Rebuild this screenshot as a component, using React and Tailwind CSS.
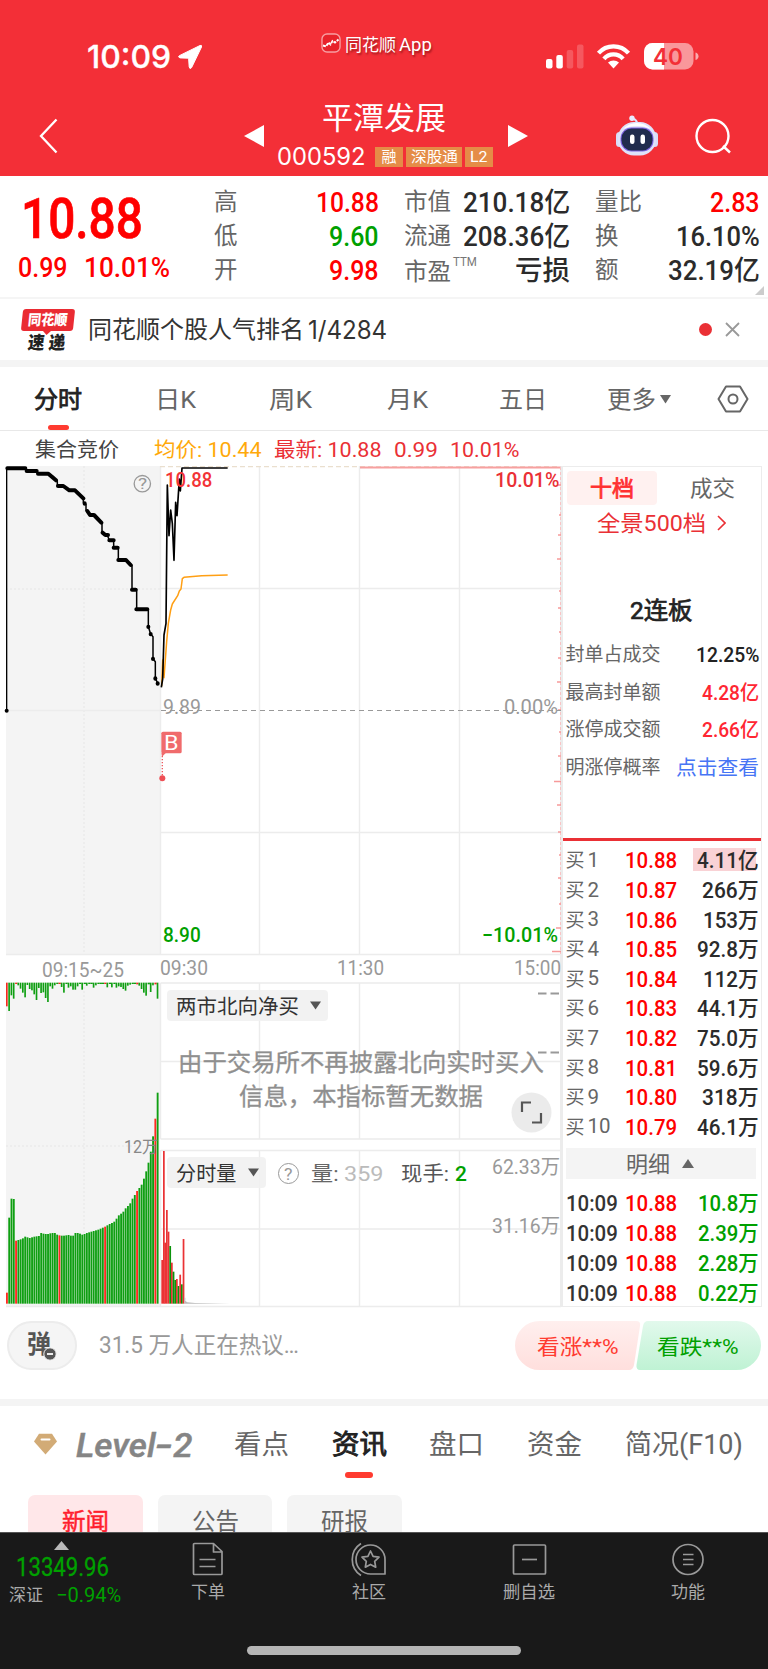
import React, { useLayoutEffect, useRef, useState } from "react";

/* Condenses or widens one line of text to the width of its box. */
function Fit({ children, className = "" }) {
  const box = useRef(null);
  const line = useRef(null);
  const [scale, setScale] = useState(1);
  useLayoutEffect(() => {
    setScale(box.current.clientWidth / line.current.offsetWidth);
  }, []);
  return (
    <span ref={box} className={`block shrink-0 whitespace-nowrap ${className}`}>
      <span ref={line} className="inline-block origin-left" style={{ transform: `translateY(1px) scaleX(${scale})` }}>
        {children}
      </span>
    </span>
  );
}

function StatusBar() {
  return (
    <div className="flex h-[88px] items-start text-white">
      <Fit className="ml-[87px] mt-[40px] w-[84px] text-[31.5px] font-medium leading-[32px] [-webkit-text-stroke:0.3px] [font-family:Inter,sans-serif]">10:09</Fit>
      <svg className="ml-[7px] mt-[44px]" width="25" height="26" viewBox="0 0 25 26">
        <path d="M22 1.5 L1.3 11.7 Q-.4 13.2 2 13.9 L10.6 14.2 L11.2 23 Q11.8 25.8 13.6 23.6 L23.5 3 Q24 .6 22 1.5Z" fill="#fff" stroke="#fff" strokeWidth="1" />
      </svg>
      <svg className="ml-[118px] mt-[33px]" width="20" height="20" viewBox="0 0 20 20">
        <rect x="1" y="1" width="18" height="18" rx="5" fill="#e8222b" stroke="#fff" strokeOpacity=".55" strokeWidth="1.4" />
        <path d="M2 12.5l3 1 2.5-4 2 2 2-3.5 2.5 1.5 3.5-3" fill="none" stroke="#fff" strokeWidth="1.900" strokeDasharray="3 1" />
      </svg>
      <Fit className="ml-[4px] mt-[34px] w-[87px] text-[17px] leading-[20px] [text-shadow:1px_2px_2px_rgba(80,0,0,.5)]">同花顺<span className="ml-[3px] text-[18.5px]">App</span></Fit>
      <svg className="ml-[113px] mt-[42px]" width="154" height="30" viewBox="0 0 154 30">
        <rect x="1" y="17" width="6.5" height="9.5" rx="2" fill="#fff" />
        <rect x="11.300" y="13" width="6.500" height="13.500" rx="2" fill="#fff" />
        <rect x="21.700" y="8" width="6.500" height="18.500" rx="2" fill="#fff" fillOpacity=".2" />
        <rect x="32" y="2.500" width="6.500" height="24" rx="2" fill="#fff" fillOpacity=".2" />
        <g fill="none" stroke="#fff" strokeWidth="4.2">
          <path d="M53.500 11.200a20 20 0 0 1 30 0" />
          <path d="M58.900 16.800a12.600 12.600 0 0 1 19.200 0" />
        </g>
        <path d="M63 20.600a8 8 0 0 1 11 0l-5.500 5.800z" fill="#fff" />
        <clipPath id="cell"><rect x="99" y="1" width="49.500" height="26.500" rx="8.500" /></clipPath>
        <g clipPath="url(#cell)">
          <rect x="99" y="1" width="50" height="27" fill="#fff" fillOpacity=".5" />
          <rect x="99" y="1" width="20" height="27" fill="#fff" />
        </g>
        <path d="M150.500 10.500q3 1 3 3.800t-3 3.800z" fill="#fff" fillOpacity=".6" />
        <text x="123" y="22.800" textAnchor="middle" fontFamily="Inter, sans-serif" fontWeight="600" fontSize="23.500" fill="#f32f37" textLength="30" lengthAdjust="spacingAndGlyphs">40</text>
      </svg>
    </div>
  );
}

function Robot() {
  return (
    <svg className="ml-[87px]" width="44" height="42" viewBox="0 0 44 42">
      <path d="M22 9Q22 5 18.500 4" fill="none" stroke="#dfe3fb" strokeWidth="2.2" />
      <circle cx="17" cy="3.200" r="2.700" fill="#e9ebff" />
      <rect x="1" y="17" width="7" height="15" rx="3.500" fill="#d9ddf8" />
      <rect x="36" y="17" width="7" height="15" rx="3.500" fill="#d9ddf8" />
      <rect x="3" y="7" width="38" height="33.500" rx="16" fill="#dfe2fa" />
      <path d="M8 14Q14 8 22 8t14 6Q30 11 22 11T8 14Z" fill="#fff" />
      <rect x="5.500" y="12.500" width="33" height="24" rx="11" fill="#7c63e0" />
      <rect x="6.500" y="13.500" width="31" height="22" rx="10" fill="#202c4d" />
      <rect x="15" y="19.500" width="4.500" height="9.500" rx="2.200" fill="#fff" />
      <rect x="25.500" y="19.500" width="4.500" height="9.500" rx="2.200" fill="#fff" />
    </svg>
  );
}

function TitleBar() {
  return (
    <div className="flex h-[88px] items-start text-white">
      <svg className="ml-[38px] mt-[30px]" width="21" height="36" viewBox="0 0 21 36">
        <path d="M18.500 1.500L3 18l15.500 16.500" fill="none" stroke="#fff" strokeWidth="2.300" />
      </svg>
      <svg className="ml-[185px] mt-[37px]" width="20" height="22" viewBox="0 0 20 22"><path d="M20 0v22L0 11z" fill="#fff" /></svg>
      <div className="ml-[13px] flex w-[218px] flex-col">
        <Fit className="ml-[45px] mt-[11px] w-[124px] text-[31px] leading-[38px]">平潭发展</Fit>
        <div className="mt-[8px] flex h-[22px] items-center">
          <Fit className="w-[89px] text-[24px] leading-[22px] [font-family:Inter,sans-serif]">000592</Fit>
          <div className="ml-[9px] mt-[1px] flex gap-[3px] text-[15px] leading-[18px]">
            <div className="flex h-[20px] w-[28px] justify-center bg-[#e58c47]"><Fit className="w-[15px]">融</Fit></div>
            <div className="flex h-[20px] w-[56px] justify-center bg-[#e58c47]"><Fit className="w-[47px]">深股通</Fit></div>
            <div className="flex h-[20px] w-[28px] justify-center bg-[#e58c47]"><Fit className="w-[18px]">L2</Fit></div>
          </div>
        </div>
      </div>
      <svg className="ml-[13px] mt-[37px]" width="20" height="22" viewBox="0 0 20 22"><path d="M0 0v22L20 11z" fill="#fff" /></svg>
      <div className="mt-[27px] flex"><Robot /></div>
      <svg className="ml-[36px] mt-[30px]" width="37" height="37" viewBox="0 0 37 37">
        <circle cx="17.500" cy="18" r="16" fill="none" stroke="#fff" strokeWidth="2.400" />
        <path d="M28 28l7 6.500" stroke="#fff" strokeWidth="2.400" />
      </svg>
    </div>
  );
}

function Row({ label, children }) {
  return (
    <div className="flex h-[34px] items-center justify-between">
      {label}
      {children}
    </div>
  );
}

function Quote() {
  const lab = "text-[23.5px] leading-[34px] text-[#666]";
  const val = "text-[27px] font-medium leading-[34px]";
  return (
    <div className="flex h-[121px] pt-[9px]">
      <div className="w-[214px] shrink-0 text-[#f00]">
        <Fit className="ml-[21px] mt-[3px] w-[122px] text-[56px] font-medium leading-[60px] [-webkit-text-stroke:0.7px]">10.88</Fit>
        <div className="mt-[2px] flex text-[28px] leading-[34px]">
          <Fit className="ml-[18px] w-[50px] font-medium">0.99</Fit>
          <Fit className="ml-[16px] w-[86px] font-medium">10.01%</Fit>
        </div>
      </div>
      <div className="w-[165px]">
        <Row label={<span className={lab}>高</span>}><Fit className={`w-[63px] text-[#f00] ${val}`}>10.88</Fit></Row>
        <Row label={<span className={lab}>低</span>}><Fit className={`w-[50px] text-[#00a000] ${val}`}>9.60</Fit></Row>
        <Row label={<span className={lab}>开</span>}><Fit className={`w-[50px] text-[#f00] ${val}`}>9.98</Fit></Row>
      </div>
      <div className="ml-[25px] w-[166px] text-[#2b2b2b]">
        <Row label={<span className={lab}>市值</span>}><Fit className={`w-[107px] ${val}`}>210.18亿</Fit></Row>
        <Row label={<span className={lab}>流通</span>}><Fit className={`w-[107px] ${val}`}>208.36亿</Fit></Row>
        <Row
          label={
            <span className="flex pt-[4px]">
              <span className={lab}>市盈</span>
              <Fit className="-mt-[2px] ml-[2px] w-[24px] text-[12px] leading-[16px] text-[#777]">TTM</Fit>
            </span>
          }
        >
          <Fit className={`w-[55px] ${val}`}>亏损</Fit>
        </Row>
      </div>
      <div className="ml-[25px] w-[165px] text-[#2b2b2b]">
        <Row label={<span className={lab}>量比</span>}><Fit className={`w-[50px] text-[#f00] ${val}`}>2.83</Fit></Row>
        <Row label={<span className={lab}>换</span>}><Fit className={`w-[84px] ${val}`}>16.10%</Fit></Row>
        <Row label={<span className={lab}>额</span>}><Fit className={`w-[92px] ${val}`}>32.19亿</Fit></Row>
      </div>
      <svg className="-ml-[5px] mt-[101px] shrink-0" width="9" height="9" viewBox="0 0 9 9"><path d="M9 0v9H0z" fill="#ccc" /></svg>
    </div>
  );
}

function Banner() {
  return (
    <div className="flex h-[63px] items-center border-t-2 border-[#f5f5f5]">
      <div className="ml-[22px] w-[52px] pt-[2px]">
        <div className="flex h-[22px] -skew-x-6 items-center justify-center rounded-[3px] bg-[#ea2b33]">
          <Fit className="w-[40px] text-[14.5px] font-black leading-[18px] text-white">同花顺</Fit>
        </div>
        <svg className="ml-[21px] block" width="8" height="4" viewBox="0 0 8 4"><path d="M0 0h8L3.500 4z" fill="#ea2b33" /></svg>
        <div className="-mt-[3px] flex h-[20px] -skew-x-6 justify-center pr-[3px]">
          <Fit className="w-[37px] text-[18px] font-black leading-[20px] text-[#222]">速 递</Fit>
        </div>
      </div>
      <Fit className="-mt-[1px] ml-[14px] w-[216px] text-[24px] leading-[34px] text-[#333]">同花顺个股人气排名</Fit>
      <Fit className="-mt-[1px] ml-[4px] w-[79px] text-[25px] leading-[34px] text-[#333] [font-family:Inter,sans-serif]">1/4284</Fit>
      <div className="ml-[312px] size-[13px] rounded-full bg-[#ea3035]" />
      <svg className="ml-[13px]" width="15" height="15" viewBox="0 0 15 15"><path d="M1 1l13 13M14 1L1 14" stroke="#999" strokeWidth="1.800" /></svg>
    </div>
  );
}

function PeriodTabs() {
  return (
    <div className="flex h-[64px] border-b border-[#e8e8e8] pt-[15px] text-[24px] leading-[34px] text-[#666]">
      <div className="ml-[34px] w-[48px]">
        <Fit className="w-[48px] text-[#222] [-webkit-text-stroke:0.8px]">分时</Fit>
        <div className="ml-[14px] mt-[9px] h-[5px] w-[21px] rounded-full bg-[#ff3b30]" />
      </div>
      <Fit className="ml-[73px] w-[41px]">日K</Fit>
      <Fit className="ml-[73px] w-[43px]">周K</Fit>
      <Fit className="ml-[75px] w-[41px]">月K</Fit>
      <Fit className="ml-[71px] w-[48px]">五日</Fit>
      <Fit className="ml-[60px] w-[49px]">更多</Fit>
      <svg className="ml-[4px] mt-[13px]" width="11" height="9" viewBox="0 0 11 9"><path d="M0 0h11L5.500 8.500z" fill="#666" /></svg>
      <svg className="ml-[46px] mt-[3px]" width="32" height="28" viewBox="0 0 32 28" fill="none" stroke="#666" strokeWidth="2">
        <path d="M9 1.500h14L30.500 14 23 26.500H9L1.500 14z" strokeLinejoin="round" />
        <circle cx="16" cy="14" r="4.500" />
      </svg>
    </div>
  );
}

function Legend() {
  return (
    <div className="flex h-[35px] items-center text-[20.5px] leading-[30px] text-[#ea3035]">
      <Fit className="ml-[35px] w-[84px] text-[#444]">集合竞价</Fit>
      <Fit className="ml-[35px] w-[108px] text-[#ffa90a]">均价: 10.44</Fit>
      <Fit className="ml-[12px] w-[108px]">最新: 10.88</Fit>
      <Fit className="ml-[12px] w-[44px]">0.99</Fit>
      <Fit className="ml-[12px] w-[70px]">10.01%</Fit>
    </div>
  );
}

const depthTops = [
  1088, 863, 806, 807, 932, 930, 928, 925, 920, 922, 924, 922, 920, 919, 918, 909, 911, 912, 912, 910, 909, 909, 914, 916, 917, 917, 916, 915,
  917, 917, 909, 909, 911, 914, 912, 909, 907, 905, 903, 901, 899, 896, 893, 890, 886, 882, 879, 875, 866, 856, 851, 845, 835, 828, 820, 806,
  795, 783, 774, 764, 746, 724, 698, 665, 619, 566, 488,
];
const hangBottoms = [
  228, 242, 195, 205, 161, 165, 175, 187, 201, 164, 176, 180, 192, 209, 173, 188, 186, 203, 215, 168, 175, 165, 161, 161, 170, 187, 161, 172,
  168, 178, 178, 168, 161, 178, 161, 166, 161, 161, 172, 165, 161, 161, 161, 161, 171, 161, 171, 161, 172, 168, 170, 176, 181, 166, 163, 161,
  161, 162, 166, 176, 187, 196, 162, 185, 165, 162, 205,
];
const redBars = [0, 4, 23, 43, 57, 65];
const minuteBars = [
  [484, 990, 1], [489, 663, 1], [493, 938, 1], [498, 840, 1], [503, 905, 1], [508, 948, 0], [513, 998, 1], [518, 1025, 0], [523, 1050, 0],
  [528, 1047, 1], [533, 1068, 0], [538, 1034, 1], [543, 1063, 0], [548, 927, 1],
];
const edgeTicks = [
  [485, 3], [515, 2], [535, 3], [559, 4], [591, 2], [608, 3], [632, 2], [658, 3], [682, 4], [710, 3], [732, 2], [756, 3], [781.500, 7], [805, 4],
  [832, 3], [855, 2], [878, 3], [904, 2], [928, 5], [951.500, 9],
];

function ChartDrawing() {
  return (
    <svg width="562" height="843" viewBox="0 466 562 843" className="block">
      <rect x="6" y="466" width="154" height="488" fill="#f4f4f4" />
      <rect x="6" y="982.500" width="154" height="323.500" fill="#f4f4f4" />
      <g stroke="#e6e6e6" strokeWidth="1" strokeDasharray="2 2">
        <path d="M84 466V954M84 983V1236M6 589H160M6 1146H157" />
      </g>
      <g stroke="#ececec" strokeWidth="1.400" fill="none">
        <path d="M160.500 466V954.500M259.500 466V954.500M359.500 466V954.500M459.500 466V954.500M160 588.500H561M160 832.500H561M6 710.500H160M6 954.500H561" />
        <path d="M160.500 983H561M160.500 1061.500H561M160.500 1139H561M160.500 983V1139M259.500 983V1139M359.500 983V1139M459.500 983V1139" />
        <path d="M160.500 1150.500H561M160.500 1229H561M6 1306.500H561M160.500 1150V1306M259.500 1150V1306M359.500 1150V1306M459.500 1150V1306" />
        <path d="M561 466V1307" strokeWidth="2" />
      </g>
      <path d="M160 466.500H560" stroke="#eadfce" strokeDasharray="5 3" strokeWidth="1.500" />
      <path d="M360 467.500H560.500" stroke="#f7a0a0" strokeWidth="1.800" />
      <path d="M560.500 467V954" stroke="#f9c4c4" strokeDasharray="3 2" strokeWidth="1" />
      {edgeTicks.map(([y, w]) => (
        <path key={y} d={`M${561 - w} ${y}h${w}`} stroke="#f79a9a" strokeWidth="1.500" />
      ))}
      <path d="M161 710.500H561" stroke="#999" strokeWidth="1.200" strokeDasharray="5 4" />

      <g transform="translate(0 455) scale(.33333)" fill="none" strokeLinejoin="round">
        <path d="M20 766V40" stroke="#000" strokeWidth="4" />
        <circle cx="20" cy="767" r="6" fill="#000" />
        <path
          d="M20 40H76L80 48H110L114 56H145L160 65L172 80V93H190L208 106H225L250 130V143L258 148V166L270 180H282L306 205V233L322 241L328 256H341V278H355V315H378L396 331V403H410V463H445V515L452 537L459 545V611L466 620V670L473 684"
          stroke="#000"
          strokeWidth="4.500"
        />
        <path
          d="M22 40H76M80 48H110M114 56H145L168 76M174 93H190L208 106H225L250 130M254 145v1M262 168L270 180H282L304 203M308 233L316 240H324M328 256H341M341 278H353M355 315H378L392 330M396 404H407M409 463H442M445 515v1M452 537v1M459 611v1M466 670v1M473 685v1"
          stroke="#000"
          strokeWidth="12"
          strokeLinecap="round"
        />
        <path d="M485 694L488 615L492 668L500 560L505 505L512 465L517 447L533 422L538 408L543 402L547 371L552 367L570 365L605 362L683 360" stroke="#ff9f14" strokeWidth="4.500" />
        <path d="M484 697L488 672L492 540L498 505L502 90L507 242L512 165L517 205L522 316L527 142L531 182L538 72L541 108L546 39H683" stroke="#000" strokeWidth="5" />
        <rect x="484" y="830" width="61" height="65" rx="5" fill="#f06b6c" />
        <path d="M484 893h14l-12 12z" fill="#f06b6c" />
        <path d="M487 903V962" stroke="#ee5a5f" strokeWidth="4" strokeDasharray="4 5" />
        <circle cx="487" cy="970" r="9" fill="#ee4f55" />
        <circle cx="427" cy="86" r="24.500" stroke="#999" strokeWidth="4" />
      </g>

      <g transform="translate(0 930) scale(.33333)">
        {depthTops.map((top, i) => (
          <rect key={i} x={18 + i * 6.850} y={top} width="5.600" height={1121 - top} fill={redBars.includes(i) ? "#ff2a20" : "#0f9f12"} />
        ))}
        {hangBottoms.map((bottom, i) => (
          <rect key={i} x={18 + i * 6.850} y="158" width={i && bottom < 163 ? 6.900 : 5} height={bottom - 157} fill={redBars.includes(i) ? "#f5291f" : "#0f9f12"} />
        ))}
        {minuteBars.map(([x, top, up]) => (
          <rect key={x} x={x} y={top} width="5.200" height={1121 - top} fill={up ? "#ea3335" : "#0b930b"} />
        ))}
        <path d="M553 1121V1103H556V1113L562 1117L585 1119L690 1121Z" fill="#bbb" />
      </g>
    </svg>
  );
}

function Caret({ className = "" }) {
  return <svg className={className} width="11" height="9" viewBox="0 0 11 9"><path d="M0 .5h11L5.500 8.500z" fill="#555" /></svg>;
}

function Charts() {
  const tick = "absolute text-[20.5px] leading-[24px]";
  return (
    <div className="relative h-[843px] w-[562px] shrink-0 text-[#999]">
      <ChartDrawing />
      <Fit className="absolute left-[138px] top-[8px] w-[9px] text-[15px] leading-[19px]">?</Fit>
      <Fit className={`${tick} left-[165px] top-[1px] w-[47px] font-medium text-[#f33336]`}>10.88</Fit>
      <Fit className={`${tick} left-[495px] top-[1px] w-[64px] font-medium text-[#ea3035]`}>10.01%</Fit>
      <Fit className={`${tick} left-[163px] top-[228px] w-[38px]`}>9.89</Fit>
      <Fit className={`${tick} left-[504px] top-[228px] w-[54px]`}>0.00%</Fit>
      <Fit className={`${tick} left-[163px] top-[456px] w-[38px] font-medium text-[#00a000]`}>8.90</Fit>
      <Fit className={`${tick} left-[482px] top-[456px] w-[76px] font-medium text-[#00a000]`}>−10.01%</Fit>
      <Fit className="absolute left-[164px] top-[265px] w-[14px] text-[20px] leading-[22px] text-white">B</Fit>
      <Fit className={`${tick} left-[42px] top-[491px] w-[82px]`}>09:15~25</Fit>
      <Fit className={`${tick} left-[160px] top-[489px] w-[48px]`}>09:30</Fit>
      <Fit className={`${tick} left-[337px] top-[489px] w-[47px]`}>11:30</Fit>
      <Fit className={`${tick} left-[514px] top-[489px] w-[47px]`}>15:00</Fit>

      <div className="absolute left-[167px] top-[524px] flex h-[31px] w-[161px] items-center rounded-[4px] bg-[#f1f1f1]/90 pl-[9px] text-[20.5px] leading-[30px] text-[#333]">
        <Fit className="w-[123px]">两市北向净买</Fit>
        <Caret className="ml-[11px]" />
      </div>
      <Fit className="absolute left-[178px] top-[579px] w-[366px] text-[24.4px] leading-[34px] text-[#8f8f8f] [-webkit-text-stroke:0.3px]">由于交易所不再披露北向实时买入</Fit>
      <Fit className="absolute left-[239px] top-[613px] w-[244px] text-[24.4px] leading-[34px] text-[#8f8f8f] [-webkit-text-stroke:0.3px]">信息，本指标暂无数据</Fit>
      <svg className="absolute left-[537px] top-[525px]" width="24" height="64" viewBox="0 0 24 64"><path d="M1 2.500h8.500M13.500 2.500h8.500M1 61.500h8.500M13.500 61.500h8.500" stroke="#999" strokeWidth="1.800" /></svg>
      <svg className="absolute left-[511px] top-[626px]" width="41" height="41" viewBox="0 0 41 41">
        <circle cx="20.500" cy="20.500" r="20" fill="#ebebeb" />
        <path d="M11 20v-9.500h9M30 21v9.500h-9" fill="none" stroke="#555" strokeWidth="2.200" />
      </svg>

      <Fit className="absolute left-[124px] top-[668px] w-[34px] text-[17.5px] leading-[24px] text-[#888]">12万</Fit>
      <div className="absolute left-[167px] top-[691px] flex h-[31px] w-[99px] items-center rounded-[4px] bg-[#f1f1f1]/90 pl-[9px] text-[20.5px] leading-[30px] text-[#333]">
        <Fit className="w-[61px]">分时量</Fit>
        <Caret className="ml-[11px]" />
      </div>
      <div className="absolute left-[278px] top-[697px] flex size-[21px] items-center justify-center rounded-full border-[1.5px] border-[#999]">
        <Fit className="w-[9px] text-[16px] leading-[16px]">?</Fit>
      </div>
      <Fit className="absolute left-[311px] top-[692px] w-[27px] text-[20.5px] leading-[30px] text-[#666]">量:</Fit>
      <Fit className="absolute left-[344px] top-[692px] w-[39px] text-[21px] leading-[30px] text-[#bbb]">359</Fit>
      <Fit className="absolute left-[401px] top-[692px] w-[48px] text-[20.5px] leading-[30px] text-[#555]">现手:</Fit>
      <Fit className="absolute left-[455px] top-[692px] w-[12px] text-[21px] font-medium leading-[30px] text-[#00a000]">2</Fit>
      <Fit className={`${tick} left-[492px] top-[688px] w-[68px]`}>62.33万</Fit>
      <Fit className={`${tick} left-[492px] top-[747px] w-[68px]`}>31.16万</Fit>
    </div>
  );
}

const bids = [
  ["1", "10.88", "4.11亿", "w-[62px]"], ["2", "10.87", "266万", "w-[57px]"], ["3", "10.86", "153万", "w-[56px]"], ["4", "10.85", "92.8万", "w-[62px]"],
  ["5", "10.84", "112万", "w-[56px]"], ["6", "10.83", "44.1万", "w-[62px]"], ["7", "10.82", "75.0万", "w-[62px]"], ["8", "10.81", "59.6万", "w-[62px]"],
  ["9", "10.80", "318万", "w-[57px]"], ["10", "10.79", "46.1万", "w-[62px]"],
];
const trades = ["10.8万", "2.39万", "2.28万", "0.22万"];

function SealRow({ label, children }) {
  return (
    <div className="flex h-[37.8px] items-center justify-between pl-[2.5px] pr-[2px] leading-[30px]">
      <Fit className="w-[95px] text-[19px] text-[#666]">{label}</Fit>
      {children}
    </div>
  );
}

function Book() {
  return (
    <div className="h-[841px] w-[199.5px] border border-[#ececec]">
      <div className="ml-[4px] mt-[4px] flex h-[34px] text-[22px] leading-[34px]">
        <div className="flex w-[90px] justify-center rounded-[4px] bg-[#fff1f0] text-[#ff3030]">
          <Fit className="w-[44px] [-webkit-text-stroke:0.8px]">十档</Fit>
        </div>
        <Fit className="ml-[33px] w-[45px] text-[#666]">成交</Fit>
      </div>
      <div className="ml-[33.5px] mt-[2px] flex h-[32px] items-center text-[#ea3035]">
        <Fit className="w-[109px] text-[22px] leading-[32px]">全景500档</Fit>
        <svg className="ml-[11px]" width="9" height="16" viewBox="0 0 9 16"><path d="M1 1l7 7-7 7" fill="none" stroke="#ea3035" strokeWidth="1.600" /></svg>
      </div>
      <Fit className="ml-[67px] mt-[53px] w-[63px] text-[24px] leading-[36px] text-[#222] [-webkit-text-stroke:0.7px]">2连板</Fit>
      <div className="mt-[7px] text-[20.5px] font-medium text-[#ff2632]">
        <SealRow label={<span className="font-normal">封单占成交</span>}><Fit className="w-[63px] text-[#222]">12.25%</Fit></SealRow>
        <SealRow label={<span className="font-normal">最高封单额</span>}><Fit className="w-[57px]">4.28亿</Fit></SealRow>
        <SealRow label={<span className="font-normal">涨停成交额</span>}><Fit className="w-[57px]">2.66亿</Fit></SealRow>
        <SealRow label={<span className="font-normal">明涨停概率</span>}><Fit className="w-[83px] font-normal text-[#4775f5]">点击查看</Fit></SealRow>
      </div>
      <div className="mt-[51.5px] h-[3.5px] bg-[#ea3035]" />
      <div className="mt-[4px]">
        {bids.map(([n, price, size, w], i) => (
          <div key={n} className="flex h-[29.6px] items-center pl-[2.5px] pr-[2px] text-[22px] font-medium leading-[29px]">
            <Fit className="w-[19px] text-[19px] font-normal text-[#666]">买</Fit>
            <span className="ml-[3px] w-[37.5px] pt-[1px] text-[20.5px] font-normal text-[#666]">{n}</span>
            <Fit className="w-[52px] text-[#f00]">{price}</Fit>
            <div className={i === 0 ? "ml-auto h-[23px] bg-[linear-gradient(90deg,#f9d2d5_95%,transparent_95%)] pl-[4px] leading-[23px]" : "ml-auto"}>
              <Fit className={`text-[#2b2b2b] ${w}`}>{size}</Fit>
            </div>
          </div>
        ))}
      </div>
      <div className="ml-[3px] mt-[7px] flex h-[31px] w-[190px] items-center bg-[#f4f4f4] pl-[60px] text-[#666]">
        <Fit className="w-[44px] text-[22px] leading-[31px]">明细</Fit>
        <svg className="ml-[12px]" width="12" height="9" viewBox="0 0 12 9"><path d="M0 9h12L6 0z" fill="#666" /></svg>
      </div>
      <div className="mt-[9px]">
        {trades.map((size) => (
          <div key={size} className="flex h-[29.7px] items-center pl-[2.5px] pr-[2px] text-[22px] font-medium leading-[29px]">
            <Fit className="w-[52px] text-[#333]">10:09</Fit>
            <Fit className="ml-[7.5px] w-[52px] text-[#f00]">10.88</Fit>
            <Fit className="ml-auto w-[61px] text-[#00a000]">{size}</Fit>
          </div>
        ))}
      </div>
    </div>
  );
}

function Discussion() {
  return (
    <div className="flex h-[90px] items-start pt-[12px]">
      <div className="relative ml-[7px] flex h-[49px] w-[70px] items-center justify-center rounded-[25px] border-2 border-[#ececec] bg-[#f5f5f5]">
        <Fit className="-ml-[7px] -mt-[4px] w-[24px] text-[25px] font-bold leading-[36px] text-[#555]">弹</Fit>
        <svg className="absolute left-[34px] top-[24px]" width="14" height="14" viewBox="0 0 14 14">
          <circle cx="7" cy="7" r="6.200" fill="#555" stroke="#f5f5f5" />
          <path d="M4 7h6" stroke="#fff" strokeWidth="1.800" />
        </svg>
      </div>
      <Fit className="ml-[22px] mt-[7px] w-[200px] text-[23px] leading-[34px] text-[#999]">31.5 万人正在热议…</Fit>
      <div className="relative ml-[216px] flex h-[49px] w-[246px] items-center text-[21px] leading-[32px]">
        <svg className="absolute left-0 top-0" width="246" height="49" viewBox="0 0 246 49">
          <defs>
            <linearGradient id="rise" x2="0" y2="1"><stop stopColor="#ffefee" /><stop offset="1" stopColor="#ffdfdd" /></linearGradient>
            <linearGradient id="fall" x2="0" y2="1"><stop stopColor="#e2f9ec" /><stop offset="1" stopColor="#bff2d4" /></linearGradient>
          </defs>
          <path d="M24.500 0H121q5 0 4 5L119 44q-1 5-5 5H24.500a24.500 24.500 0 0 1 0-49z" fill="url(#rise)" />
          <path d="M133 0h88.500a24.500 24.500 0 0 1 0 49H125q-4 0-3.500-5L128 5q1-5 5-5z" fill="url(#fall)" />
        </svg>
        <Fit className="relative ml-[22px] w-[81px] text-[#ff3b30]">看涨**%</Fit>
        <Fit className="relative ml-[39px] w-[81px] text-[#00a000]">看跌**%</Fit>
      </div>
    </div>
  );
}

function NewsTabs() {
  return (
    <>
      <div className="flex h-[96px] border-t-[7px] border-[#f4f4f4] pt-[19px] text-[27px] leading-[38px] text-[#666]">
        <svg className="ml-[33px] mt-[8px] shrink-0" width="25" height="22" viewBox="0 0 25 22">
          <path d="M6 .8h13L24 8.500 12.500 21.500 1 8.500z" fill="#d2ab76" />
          <path d="M8.500 6.500h8" stroke="#fff" strokeWidth="2" strokeLinecap="round" />
        </svg>
        <Fit className="ml-[18px] w-[116px] text-[34px] font-medium italic text-[#858585] [-webkit-text-stroke:0.5px] [font-family:Roboto,sans-serif]">Level<span className="inline-block scale-x-150 px-[3px]">-</span>2</Fit>
        <Fit className="ml-[42px] w-[55px]">看点</Fit>
        <div className="ml-[43px] w-[55px]">
          <Fit className="w-[55px] text-[#222] [-webkit-text-stroke:0.9px]">资讯</Fit>
          <div className="ml-[13px] mt-[9px] h-[6px] w-[28px] rounded-full bg-[#ff3b30]" />
        </div>
        <Fit className="ml-[42px] w-[55px]">盘口</Fit>
        <Fit className="ml-[43px] w-[55px]">资金</Fit>
        <Fit className="ml-[43px] w-[118px]">简况(F10)</Fit>
      </div>
      <div className="flex h-[37px] gap-[15px] overflow-hidden pl-[28px] text-[24px] leading-[52px] text-[#666]">
        <div className="flex h-[52px] w-[115px] justify-center rounded-[7px] bg-[#ffe7e9] text-[#ff1f2f] [-webkit-text-stroke:0.5px]"><Fit className="w-[47px]">新闻</Fit></div>
        <div className="flex h-[52px] w-[114px] justify-center rounded-[7px] bg-[#f4f4f4]"><Fit className="w-[47px]">公告</Fit></div>
        <div className="flex h-[52px] w-[115px] justify-center rounded-[7px] bg-[#f4f4f4] pr-[1px]"><Fit className="w-[47px]">研报</Fit></div>
      </div>
    </>
  );
}

function NavItem({ label, width, icon, className }) {
  return (
    <div className={`flex flex-col items-center ${className}`}>
      <svg width="38" height="36" viewBox="0 0 38 36" fill="none" stroke="#999" strokeWidth="1.700" strokeLinejoin="round">{icon}</svg>
      <Fit className={`text-[17px] leading-[28px] text-[#aaa] ${width}`}>{label}</Fit>
    </div>
  );
}

function BottomBar() {
  return (
    <div className="flex h-[137px] flex-col border-t border-[#555] bg-[#191919]">
      <div className="flex h-[100px] items-start pt-[8px]">
        <div className="w-[130px] shrink-0 text-[#00a000]">
          <svg className="ml-[54px] block" width="15" height="9" viewBox="0 0 15 9"><path d="M0 9h15L7.500 0z" fill="#b8b8b8" /></svg>
          <Fit className="ml-[16px] mt-[4px] w-[93px] text-[25px] leading-[26px] [-webkit-text-stroke:0.3px]">13349.96</Fit>
          <div className="mt-[1px] flex items-center leading-[26px]">
            <Fit className="ml-[9px] w-[34px] text-[17px] text-[#aaa]">深证</Fit>
            <Fit className="ml-[13px] w-[65px] text-[21px]">−0.94%</Fit>
          </div>
        </div>
        <NavItem className="ml-[58px] w-[40px]" width="w-[34px]" label="下单" icon={<path d="M4.500 3.500q0-1 1-1H24.500l8.500 8v22q0 1-1 1H5.500q-1 0-1-1zM24.500 3v8H33M10.500 18.500h16M10.500 25.500h16" />} />
        <NavItem
          className="ml-[121px] w-[40px]"
          width="w-[34px]"
          label="社区"
          icon={<><path d="M20.500 4A14.500 14.500 0 0 0 20.500 33H35V18.500A14.500 14.500 0 0 0 20.500 4z" /><path d="M11 2.500A19 19 0 0 0 11 34.500" /><path d="M20.500 10l2.600 5.400 5.900.8-4.300 4.100 1 5.900-5.200-2.800-5.200 2.800 1-5.900-4.300-4.100 5.900-.8z" /></>}
        />
        <NavItem className="ml-[113px] w-[54px]" width="w-[52px]" label="删自选" icon={<><rect x="3.500" y="4" width="32" height="29" rx="1" /><path d="M12 18.500h15" /></>} />
        <NavItem className="ml-[112px] w-[40px]" width="w-[34px]" label="功能" icon={<><circle cx="19" cy="18.500" r="15" /><path d="M14 13.500h10.500M14 18.500h10.500M14 23.500h10.500" /></>} />
      </div>
      <div className="mx-auto mt-[13px] h-[9px] w-[274px] rounded-full bg-[#b5b5b5]" />
    </div>
  );
}

export default function App() {
  return (
    <div className="h-[1669px] w-[768px] overflow-hidden bg-white [font-family:Roboto,'Noto_Sans_CJK_SC',sans-serif]">
      <div className="h-[176px] bg-[#f32f37]">
        <StatusBar />
        <TitleBar />
      </div>
      <Quote />
      <Banner />
      <div className="h-[7px] bg-[#f4f4f4]" />
      <PeriodTabs />
      <Legend />
      <div className="flex">
        <Charts />
        <Book />
      </div>
      <Discussion />
      <NewsTabs />
      <BottomBar />
    </div>
  );
}
